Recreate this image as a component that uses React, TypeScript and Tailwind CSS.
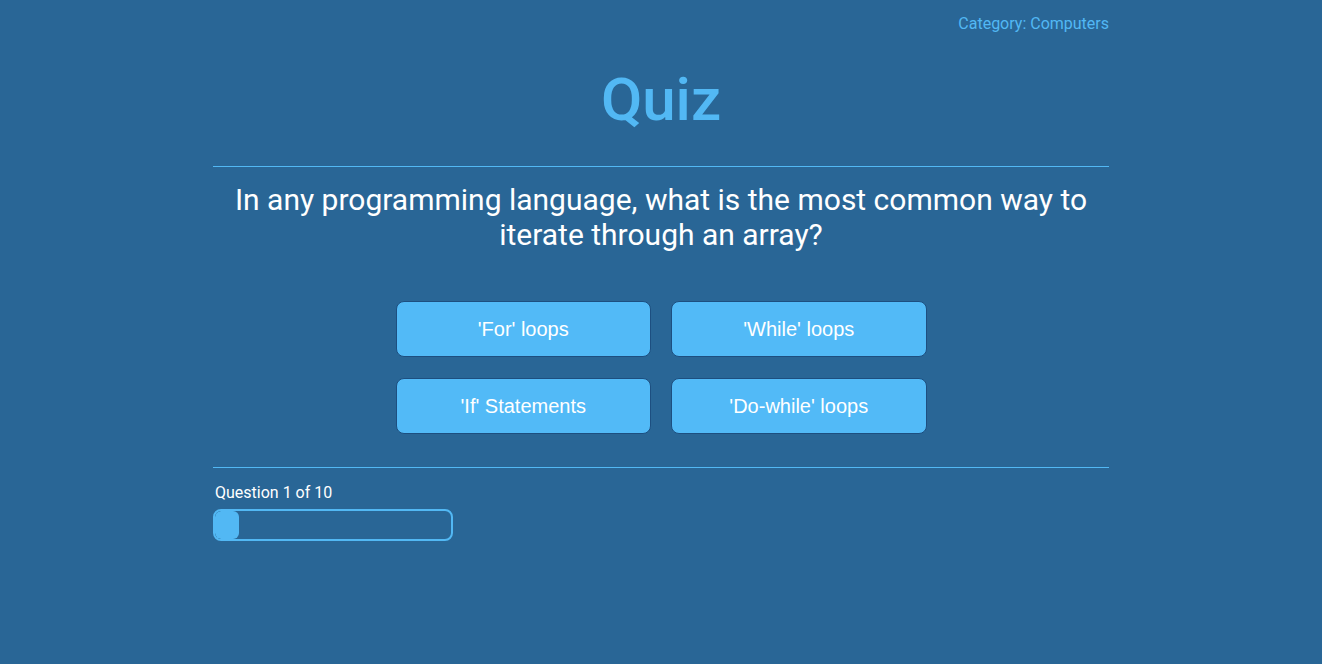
import { useState } from 'react'

const answers = ["'For' loops", "'While' loops", "'If' Statements", "'Do-while' loops"]

export default function App() {
  const [current] = useState(1)
  const total = 10

  return (
    <div className="min-h-[664px] w-full bg-[#296696] font-['Roboto',sans-serif]">
      <div className="mx-auto max-w-[896px] pt-[14px]">
        {/* Category */}
        <div className="flex justify-end">
          <span className="text-[16px] leading-[19px] text-[#52b8f4]">Category: Computers</span>
        </div>

        {/* Title */}
        <h1 className="mt-[31px] text-center text-[60px] font-medium leading-[72px] text-[#52b8f4]">Quiz</h1>

        <hr className="mt-[30px] border-0 border-t border-[#52b8f4]" />

        {/* Question */}
        <h2 className="mx-auto mt-[15px] max-w-[880px] text-center text-[30px] leading-[35px] text-white">
          In any programming language, what is the most common way to iterate through an array?
        </h2>

        {/* Answers */}
        <div className="mx-auto mt-[49px] grid w-[531px] grid-cols-2 gap-x-[20px] gap-y-[21px]">
          {answers.map((a) => (
            <button
              key={a}
              className="h-[56px] rounded-[8px] border border-[#1d4f80] bg-[#52baf7] font-['Liberation_Sans',Arial,sans-serif] text-[20px] text-white"
            >
              {a}
            </button>
          ))}
        </div>

        <hr className="mt-[33px] border-0 border-t border-[#52b8f4]" />

        {/* Progress */}
        <p className="mt-[15px] pl-[2px] text-[16px] leading-[19px] text-white">
          Question {current} of {total}
        </p>
        <div className="mt-[7px] h-[32px] w-[240px] overflow-hidden rounded-[8px] border-2 border-[#52b8f4]">
          <div className="h-full rounded-[6px] bg-[#52b8f4]" style={{ width: `${(current / total) * 100}%` }} />
        </div>
      </div>
    </div>
  )
}
